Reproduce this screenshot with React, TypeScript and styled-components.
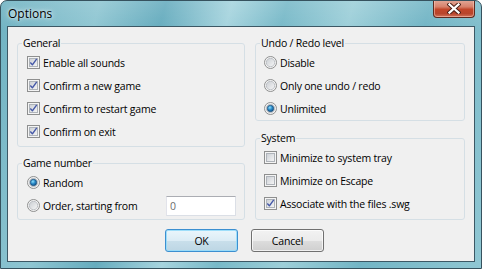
import styled, { createGlobalStyle } from "styled-components";

const GlobalStyle = createGlobalStyle`
  html, body {
    margin: 0;
    padding: 0;
    background: #ffffff;
  }
  * {
    box-sizing: border-box;
  }
`;

const Window = styled.div`
  width: 482px;
  height: 269px;
  display: flex;
  flex-direction: column;
  border: 1px solid #36525e;
  border-radius: 7px 7px 0 0;
  background:
    linear-gradient(180deg, rgba(255, 255, 255, 0.12) 0%, rgba(255, 255, 255, 0) 30px),
    linear-gradient(
      105deg,
      #6fb2c2 0%,
      #8fc6d2 18%,
      #66acbe 30%,
      #a6d4de 42%,
      #78b9c8 52%,
      #9dcfd9 64%,
      #72b5c5 78%,
      #90c7d3 100%
    );
  font-family: "Open Sans", "Noto Sans", "DejaVu Sans", sans-serif;
  font-size: 10.5px;
  letter-spacing: -0.2px;
  color: #000000;
  overflow: hidden;
`;

const TitleBar = styled.div`
  height: 25px;
  flex: none;
  display: flex;
  justify-content: space-between;
  align-items: flex-start;
`;

const Title = styled.div`
  padding: 5px 0 0 7px;
  font-size: 12px;
  letter-spacing: 0;
  line-height: 16px;
  text-shadow: 0 0 6px rgba(255, 255, 255, 0.9), 0 0 3px rgba(255, 255, 255, 0.8);
`;

const CloseButton = styled.div`
  width: 42px;
  height: 18px;
  margin: -1px 6px 0 0;
  display: flex;
  align-items: center;
  justify-content: center;
  border: 1px solid #5e2a20;
  border-top: none;
  border-radius: 0 0 4px 4px;
  background: linear-gradient(
    180deg,
    #e3a999 0%,
    #d7816b 40%,
    #c2462a 55%,
    #b8452c 80%,
    #d0745c 100%
  );
  box-shadow: inset 0 0 0 1px rgba(255, 210, 195, 0.5);
`;

const Client = styled.div`
  flex: 1;
  margin: 0 6px 6px;
  border: 1px solid #3c5865;
  background: #f0f0f0;
  display: flex;
  flex-direction: column;
`;

const Columns = styled.div`
  display: grid;
  grid-template-columns: 228px 210px;
  column-gap: 10px;
  padding: 9px 0 0 9px;
`;

const Column = styled.div<{ $gap: number }>`
  display: flex;
  flex-direction: column;
  gap: ${(p) => p.$gap}px;
`;

const Group = styled.fieldset<{ $height: number }>`
  margin: 0;
  height: ${(p) => p.$height}px;
  padding: 0 0 0 4px;
  border: 1px solid #d5dfe5;
  border-radius: 3px;
  min-width: 0;
`;

const Legend = styled.legend`
  padding: 0 1px;
  line-height: 15px;
`;

const Rows = styled.div<{ $inset: number }>`
  display: flex;
  flex-direction: column;
  padding-left: ${(p) => p.$inset}px;
`;

const Row = styled.div`
  height: 23px;
  display: flex;
  align-items: center;
  gap: 3px;
  white-space: nowrap;
`;

const NumberBox = styled.div`
  width: 70px;
  height: 20px;
  margin: 0 8px 0 auto;
  padding: 0 3px;
  display: flex;
  align-items: center;
  background: #ffffff;
  border: 1px solid #dbdfe6;
  border-top-color: #abadb3;
  border-left-color: #e2e3ea;
  color: #6d6d6d;
`;

const ButtonRow = styled.div`
  display: flex;
  justify-content: center;
  gap: 13px;
  padding: 9px 0 0 7px;
`;

const Button = styled.div<{ $primary?: boolean }>`
  width: 73px;
  height: 23px;
  display: flex;
  align-items: center;
  justify-content: center;
  border-radius: 3px;
  border: 1px solid ${(p) => (p.$primary ? "#3c8fd0" : "#707070")};
  background: ${(p) =>
    p.$primary
      ? "linear-gradient(180deg, #eaf6fc 0%, #dcecf5 50%, #c9dfeb 51%, #bdd6e4 100%)"
      : "linear-gradient(180deg, #f2f2f2 0%, #ebebeb 50%, #dddddd 51%, #cfcfcf 100%)"};
  box-shadow: inset 0 0 0 1px
    ${(p) => (p.$primary ? "rgba(150, 220, 250, 0.9)" : "rgba(255, 255, 255, 0.7)")};
`;

const CheckBox = ({ checked }: { checked?: boolean }) => (
  <svg width="13" height="13" viewBox="0 0 13 13">
    <defs>
      <linearGradient id="cbInner" x1="0" y1="0" x2="1" y2="1">
        <stop offset="0" stopColor="#cbcfd5" />
        <stop offset="1" stopColor="#f6f6f6" />
      </linearGradient>
    </defs>
    <rect x="0.5" y="0.5" width="12" height="12" fill="#f4f4f4" stroke="#8e8f8f" />
    <rect x="2.5" y="2.5" width="8" height="8" fill="url(#cbInner)" stroke="#aeb3b9" />
    {checked && (
      <path
        d="M3.3 6.5 L5.4 8.8 L9.7 2.8"
        fill="none"
        stroke="#4558a8"
        strokeWidth="1.4"
        strokeLinejoin="round"
      />
    )}
  </svg>
);

const Radio = ({ checked }: { checked?: boolean }) => (
  <svg width="13" height="13" viewBox="0 0 13 13">
    <defs>
      <linearGradient id="rbInner" x1="0" y1="0" x2="1" y2="1">
        <stop offset="0" stopColor="#c9cdd2" />
        <stop offset="1" stopColor="#f7f7f7" />
      </linearGradient>
      <radialGradient id="rbDot" cx="0.4" cy="0.35" r="0.7">
        <stop offset="0" stopColor="#8fe0fb" />
        <stop offset="0.5" stopColor="#2a89c8" />
        <stop offset="1" stopColor="#0d4f86" />
      </radialGradient>
    </defs>
    <circle cx="6.5" cy="6.5" r="6" fill="#f4f4f4" stroke="#8e8f8f" />
    <circle cx="6.5" cy="6.5" r="4.2" fill="url(#rbInner)" stroke="#b4b8bd" strokeWidth="0.8" />
    {checked && <circle cx="6.5" cy="6.5" r="3.2" fill="url(#rbDot)" stroke="#1c4f78" strokeWidth="0.7" />}
  </svg>
);

const CloseGlyph = () => (
  <svg width="14" height="11" viewBox="0 0 14 11">
    <path d="M2.5 1.5 L11.5 9.5 M11.5 1.5 L2.5 9.5" stroke="#4b1f16" strokeWidth="4.2" strokeLinecap="square" />
    <path d="M2.5 1.5 L11.5 9.5 M11.5 1.5 L2.5 9.5" stroke="#ffffff" strokeWidth="2.3" strokeLinecap="square" />
  </svg>
);

const general = [
  { label: "Enable all sounds", checked: true },
  { label: "Confirm a new game", checked: true },
  { label: "Confirm to restart game", checked: true },
  { label: "Confirm on exit", checked: true },
];

const undo = [
  { label: "Disable", checked: false },
  { label: "Only one undo / redo", checked: false },
  { label: "Unlimited", checked: true },
];

const system = [
  { label: "Minimize to system tray", checked: false },
  { label: "Minimize on Escape", checked: false },
  { label: "Associate with the files .swg", checked: true },
];

export default function App() {
  return (
    <>
      <GlobalStyle />
      <Window>
        <TitleBar>
          <Title>Options</Title>
          <CloseButton>
            <CloseGlyph />
          </CloseButton>
        </TitleBar>
        <Client>
          <Columns>
            <Column $gap={9}>
              <Group $height={111}>
                <Legend>General</Legend>
                <Rows $inset={5}>
                  {general.map((item) => (
                    <Row key={item.label}>
                      <CheckBox checked={item.checked} />
                      {item.label}
                    </Row>
                  ))}
                </Rows>
              </Group>
              <Group $height={64}>
                <Legend>Game number</Legend>
                <Rows $inset={5}>
                  <Row>
                    <Radio checked />
                    Random
                  </Row>
                  <Row>
                    <Radio />
                    Order, starting from
                    <NumberBox>0</NumberBox>
                  </Row>
                </Rows>
              </Group>
            </Column>
            <Column $gap={10}>
              <Group $height={85}>
                <Legend>Undo / Redo level</Legend>
                <Rows $inset={4}>
                  {undo.map((item) => (
                    <Row key={item.label}>
                      <Radio checked={item.checked} />
                      {item.label}
                    </Row>
                  ))}
                </Rows>
              </Group>
              <Group $height={89}>
                <Legend>System</Legend>
                <Rows $inset={4}>
                  {system.map((item) => (
                    <Row key={item.label}>
                      <CheckBox checked={item.checked} />
                      {item.label}
                    </Row>
                  ))}
                </Rows>
              </Group>
            </Column>
          </Columns>
          <ButtonRow>
            <Button $primary>OK</Button>
            <Button>Cancel</Button>
          </ButtonRow>
        </Client>
      </Window>
    </>
  );
}
